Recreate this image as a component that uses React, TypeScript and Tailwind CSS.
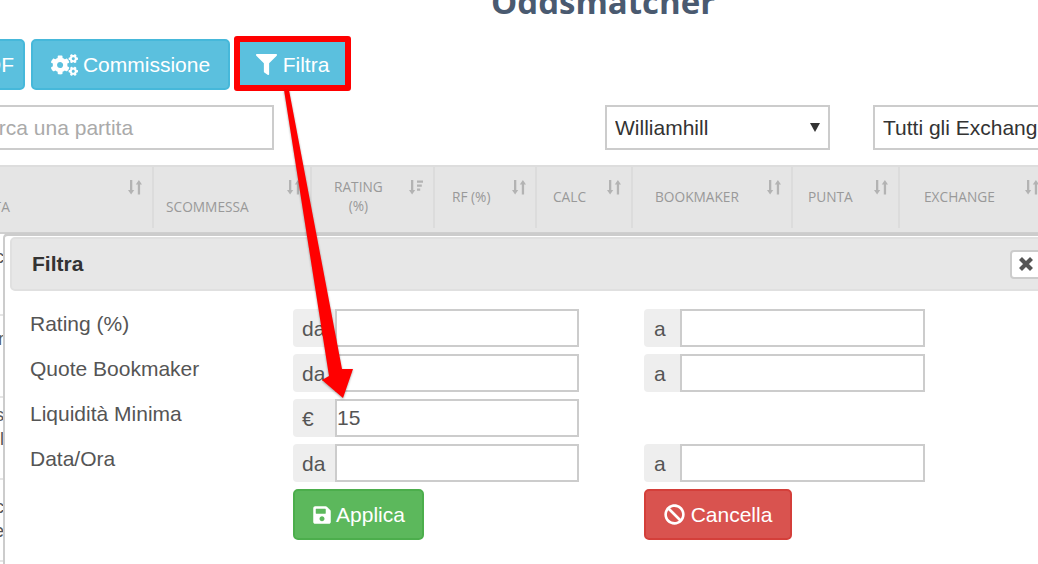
import React from "react";
import { FaCogs, FaFilter, FaSave, FaBan } from "react-icons/fa";

const SortIcon = ({ filter = false }: { filter?: boolean }) => (
  <svg width="14" height="15" viewBox="0 0 14 15" fill="#b3b3b3" className="mt-[13px] shrink-0">
    <path d="M2 0h2.3v10H6.2L3.1 14.5 0 10h2z" />
    {filter ? (
      <path d="M8 0.5h6v2.2H8zM8 4.5h4.8v2.2H8zM8 8.5h3.2v2.2H8z" />
    ) : (
      <path d="M9.8 14.5h2.3v-10H14L10.9 0 7.8 4.5h2z" />
    )}
  </svg>
);

const cols = [
  { w: "w-[154px]", label: "DATA", pr: "pr-[10px]", text: "-ml-[25px] mt-[30px]" },
  { w: "w-[158px]", label: "SCOMMESSA", pr: "pr-[9px]", text: "ml-[12px] mt-[30px]" },
  { w: "w-[123px]", label: "RATING\n(%)", pr: "pr-[10px]", text: "ml-[22px] mt-[10px] text-center", filter: true },
  { w: "w-[102px]", label: "RF (%)", pr: "pr-[9px]", text: "ml-[17px] mt-[20px]" },
  { w: "w-[96px]", label: "CALC", pr: "pr-[10px]", text: "ml-[16px] mt-[20px]" },
  { w: "w-[160px]", label: "BOOKMAKER", pr: "pr-[10px]", text: "ml-[22px] mt-[20px]" },
  { w: "w-[107px]", label: "PUNTA", pr: "pr-[10px]", text: "ml-[15px] mt-[20px]" },
  { w: "w-[160px]", label: "EXCHANGE", pr: "pr-[19px]", text: "ml-[24px] mt-[20px]" },
];

const Group = ({ addon, value, addonW, inputW, pad }: { addon: string; value?: string; addonW: string; inputW: string; pad: string }) => (
  <div className="flex h-[38px]">
    <span className={`flex ${addonW} ${pad} items-center rounded-l-[4px] bg-[#eee] pt-[2px] text-[21px] text-[#555]`}>
      {addon}
    </span>
    <input
      readOnly
      value={value ?? ""}
      className={`${inputW} h-[38px] border-2 border-[#ccc] bg-white text-[21px] text-[#555] outline-none`}
    />
  </div>
);

const rows = [
  { label: "Rating (%)", a: "da", b: "a" },
  { label: "Quote Bookmaker", a: "da", b: "a" },
  { label: "Liquidità Minima", a: "€", value: "15" },
  { label: "Data/Ora", a: "da", b: "a" },
];

const stubs = [
  { lines: ["Ec"], pb: "pb-[34px]" },
  { lines: ["r"], pb: "pb-[34px]" },
  { lines: ["s", "l"], pb: "pb-[22px]" },
  { lines: ["c", "e"], pb: "pb-[3px]" },
];

export default function App() {
  return (
    <div className="relative h-[564px] w-[1038px] overflow-hidden bg-white font-['Liberation_Sans',Arial,sans-serif] text-[21px] text-[#333]">
      <div className="h-[36px] overflow-hidden pl-[491px]">
        <h1 className="-mt-[21px] whitespace-nowrap font-['Open_Sans',sans-serif] text-[33px] font-bold leading-[45px] text-[#4a5a70]">
          Oddsmatcher
        </h1>
      </div>

      <div className="mt-[3px] flex h-[51px] gap-[6px]">
        <button className="-ml-[50px] h-[51px] w-[75px] shrink-0 rounded-[5px] border-2 border-[#46b8da] bg-[#5bc0de] pr-[9px] text-right text-[21px] text-white">
          PDF
        </button>
        <button className="flex h-[51px] w-[199px] shrink-0 items-center justify-center gap-[5px] rounded-[5px] border-2 border-[#46b8da] bg-[#5bc0de] text-[21px] text-white">
          <FaCogs className="h-[24px] w-[27px]" />
          <span>Commissione</span>
        </button>
        <button className="relative flex h-[51px] w-[113px] shrink-0 items-center justify-center gap-[6px] rounded-[5px] bg-[#5bc0de] text-[21px] text-white">
          <FaFilter className="h-[21px] w-[21px]" />
          <span>Filtra</span>
          <span className="absolute -left-[2px] -right-[2px] -top-[3px] h-[55px] rounded-[3px] border-[6px] border-[#ff0000]" />
        </button>
      </div>

      <div className="mt-[15px] flex h-[45px]">
        <input
          readOnly
          placeholder="Cerca una partita"
          className="-ml-[30px] h-[45px] w-[304px] shrink-0 border-2 border-[#ccc] pl-0 text-[21px] outline-none placeholder:text-[#aaa]"
        />
        <div className="relative ml-[331px] h-[45px] w-[225px] shrink-0">
          <select className="h-[45px] w-[225px] appearance-none border-2 border-[#ccc] bg-white pl-[8px] text-[21px] text-[#333] outline-none">
            <option>Williamhill</option>
          </select>
          <svg width="10" height="11" viewBox="0 0 10 11" className="pointer-events-none absolute right-[10px] top-[17px]">
            <path d="M0 1h10L5 10z" fill="#333" />
          </svg>
        </div>
        <div className="ml-[43px] h-[45px] w-[200px] shrink-0">
          <select className="h-[45px] w-[200px] appearance-none border-2 border-[#ccc] bg-white pl-[8px] text-[21px] text-[#333] outline-none">
            <option>Tutti gli Exchange</option>
          </select>
        </div>
      </div>

      <div className="mt-[15px] flex h-[69px] border-t-2 border-b-2 border-t-[#ddd] border-b-[#cfcfcf] bg-[#e5e5e5] font-['Open_Sans',sans-serif] text-[13.7px] leading-[19px] text-[#999]">
        {cols.map((c) => (
          <div
            key={c.label}
            className={`flex h-[61px] shrink-0 items-start justify-between border-r-2 border-[#dcdcdc] ${c.w} ${c.pr}`}
          >
            <span className={`${c.text} whitespace-pre-line`}>{c.label}</span>
            <SortIcon filter={c.filter} />
          </div>
        ))}
      </div>

      <div className="flex flex-col">
        {stubs.map((s, i) => (
          <div key={i} className={`flex h-[82px] w-[4px] flex-col items-end justify-center border-b-2 border-[#e5e5e5] text-[18px] leading-[24px] text-[#555] ${s.pb}`}>
            {s.lines.map((l) => (
              <span key={l}>{l}</span>
            ))}
          </div>
        ))}
      </div>

      <div className="absolute left-[3px] top-[233px] h-[340px] w-[1100px] rounded-tl-[5px] border-l-[2px] border-t-[3px] border-[#ccc] bg-white pl-[5px] pt-[1px]">
        <div className="flex h-[54px] items-center justify-between rounded-[5px] border-2 border-[#e0e0e0] bg-[#e7e7e7] pl-[20px]">
          <span className="text-[21px] font-bold text-[#333]">Filtra</span>
          <span className="mr-[51px] flex h-[29px] w-[40px] items-center rounded-[4px] border-2 border-[#ccc] bg-white pl-[6px]">
            <svg width="16" height="16" viewBox="0 0 16 16">
              <path d="M2.5 2.5l11 11M13.5 2.5l-11 11" stroke="#555" strokeWidth="4.2" fill="none" />
            </svg>
          </span>
        </div>

        <div className="mt-[18px] flex flex-col gap-[7px] pl-[20px]">
          {rows.map((r) => (
            <div key={r.label} className="flex h-[38px]">
              <label className="w-[263px] shrink-0 text-[21px] leading-[30px] text-[#555]">{r.label}</label>
              <Group addon={r.a} value={r.value} addonW="w-[42px]" inputW="w-[244px]" pad="pl-[9px]" />
              {r.b && (
                <div className="ml-[65px]">
                  <Group addon={r.b} addonW="w-[36px]" inputW="w-[245px]" pad="pl-[10px]" />
                </div>
              )}
            </div>
          ))}
          <div className="flex pl-[263px]">
            <button className="flex h-[51px] w-[131px] items-center justify-center gap-[4px] rounded-[5px] border-2 border-[#4cae4c] bg-[#5cb85c] text-[21px] text-white">
              <FaSave className="h-[20px] w-[20px]" />
              <span>Applica</span>
            </button>
            <button className="ml-[220px] flex h-[51px] w-[148px] items-center justify-center gap-[6px] rounded-[5px] border-2 border-[#d43f3a] bg-[#d9534f] text-[21px] text-white">
              <FaBan className="h-[21px] w-[21px]" />
              <span>Cancella</span>
            </button>
          </div>
        </div>
      </div>

      <svg width="1038" height="564" viewBox="0 0 1038 564" className="pointer-events-none absolute left-0 top-0">
        <polygon
          points="284,90 289,90 342,369 353,369 343,398 322,380 329,376"
          fill="#ff0000"
          style={{ filter: "drop-shadow(0px 1px 1px rgba(0,0,0,0.35))" }}
        />
      </svg>
    </div>
  );
}
